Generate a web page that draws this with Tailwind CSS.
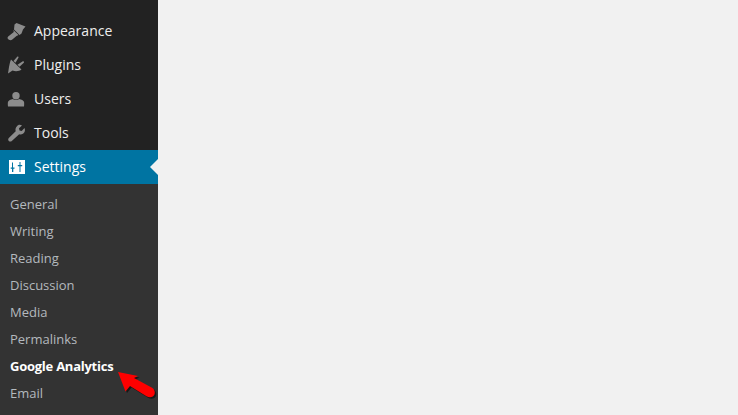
<!DOCTYPE html>
<html>
<head>
<meta charset="utf-8">
<script src="https://cdn.jsdelivr.net/npm/@tailwindcss/browser@4"></script>
</head>
<body class="m-0 bg-[#f1f1f1] font-['Open_Sans',sans-serif]">
<div class="relative flex h-[415px] w-[738px] overflow-hidden bg-[#f1f1f1]">
  <aside class="flex h-full w-[158px] shrink-0 flex-col bg-[#222222] pt-[14px]">
    <div class="flex h-[34px] items-center text-[14px] text-[#eeeeee]">
      <span class="flex w-[34px] justify-center"><svg width="20" height="20" viewBox="0 0 20 20" fill="#8c8c8c"><path d="M7.500 3.500 9.500 2 18.500 5.500 16 8.500 14.500 12.500 12.500 14 7 8.500z"/><path d="M6.300 9 11.500 14 9.500 15 5 18.800C3.800 19.600 1.500 19 .8 17.700.4 16.900.6 16.200 1.200 15.600L6.800 11z"/></svg></span>
      <span class="pb-[2px]">Appearance</span>
    </div>
    <div class="flex h-[34px] items-center text-[14px] text-[#eeeeee]">
      <span class="flex w-[34px] justify-center"><svg width="20" height="20" viewBox="0 0 20 20" fill="#8c8c8c"><path d="M4 4.500 14.500 14.500C12.500 16 9 16.800 5.500 15.500L1 18.500 2 12C2.500 10 3 6.500 4 4.500z"/><path d="M6.500 6 10.200 1.800C10.900 1.100 12 2 11.400 2.800L8.500 7.800z"/><path d="M10.500 9.800 15.800 6.300C16.700 5.800 17.500 7 16.800 7.700L12.500 11.800z"/></svg></span>
      <span class="pb-[2px]">Plugins</span>
    </div>
    <div class="flex h-[34px] items-center text-[14px] text-[#eeeeee]">
      <span class="flex w-[34px] justify-center"><svg width="20" height="20" viewBox="0 0 20 20" fill="#8c8c8c"><g transform="translate(-1 .5)"><circle cx="10" cy="6.300" r="3.700"/><path d="M7 9.500c-2.500.5-4.500 1.500-5 2.800-.3 1-.2 3.200 0 4.700h16c.2-1.500.3-3.700 0-4.700-.5-1.300-2.500-2.300-5-2.800-1 1.300-5 1.300-6 0z"/></g></svg></span>
      <span class="pb-[2px]">Users</span>
    </div>
    <div class="flex h-[34px] items-center text-[14px] text-[#eeeeee]">
      <span class="flex w-[34px] justify-center"><svg width="20" height="20" viewBox="0 0 20 20" fill="#8c8c8c"><path transform="translate(-1 0)" d="M13.500 1.800c1 0 1.800.2 2.500.6l-3 2.800.5 2.200 2.200.5 2.800-3c.5 1.200.7 2.800 0 4.200-.9 1.800-3.200 2.800-5.300 2.100L5.800 18c-1 .8-2.200.7-3-.1-.8-.8-.8-2.100 0-3l6.900-6.700c-.6-1.900 0-3.800 1.300-5 .7-.8 1.500-1.400 2.500-1.400z"/></svg></span>
      <span class="pb-[2px]">Tools</span>
    </div>
    <div class="relative flex h-[34px] items-center bg-[#0074a2] text-[14px] text-white">
      <span class="flex w-[34px] justify-center"><svg width="20" height="20" viewBox="0 0 20 20"><path fill="#ffffff" d="M2 3h16v14H2z"/><path fill="#0074a2" d="M5 5.500h1v5h1.500v1.300H6.300V15H5V11.800H3.700V10.500H5zM12.500 5h1v3h1.700v1.300h-1.700V15h-1V9.300h-1.700V8h1.700z"/></svg></span>
      <span class="pb-[2px]">Settings</span>
      <div class="absolute right-0 top-[9px] h-0 w-0 border-y-[8px] border-r-[8px] border-y-transparent border-r-[#f1f1f1]"></div>
    </div>
    <nav class="flex flex-1 flex-col bg-[#333333] pt-[7px] text-[13px] text-[#b4b9be]">
      <a class="flex h-[27px] items-center pl-[10px]">General</a>
      <a class="flex h-[27px] items-center pl-[10px]">Writing</a>
      <a class="flex h-[27px] items-center pl-[10px]">Reading</a>
      <a class="flex h-[27px] items-center pl-[10px]">Discussion</a>
      <a class="flex h-[27px] items-center pl-[10px]">Media</a>
      <a class="flex h-[27px] items-center pl-[10px]">Permalinks</a>
      <a class="flex h-[27px] items-center pl-[10px] font-bold tracking-[-0.25px] text-white">Google Analytics</a>
      <a class="flex h-[27px] items-center pl-[10px]">Email</a>
    </nav>
  </aside>
  <svg class="absolute left-[112px] top-[365px]" width="50" height="40" viewBox="0 0 50 40">
    <path d="M6 7 26 11 22 13 40.500 23C43.800 25.500 43.300 30 40.800 31.500 38.800 32.700 36.500 32.300 34.500 31.300L18 21 13.500 26.500z" fill="#000000" opacity="0.55" transform="translate(1.500 1.500)"/>
    <path d="M6 7 26 11 22 13 40.500 23C43.800 25.500 43.300 30 40.800 31.500 38.800 32.700 36.500 32.300 34.500 31.300L18 21 13.500 26.500z" fill="#fe0000"/>
  </svg>
</div>
</body>
</html>
